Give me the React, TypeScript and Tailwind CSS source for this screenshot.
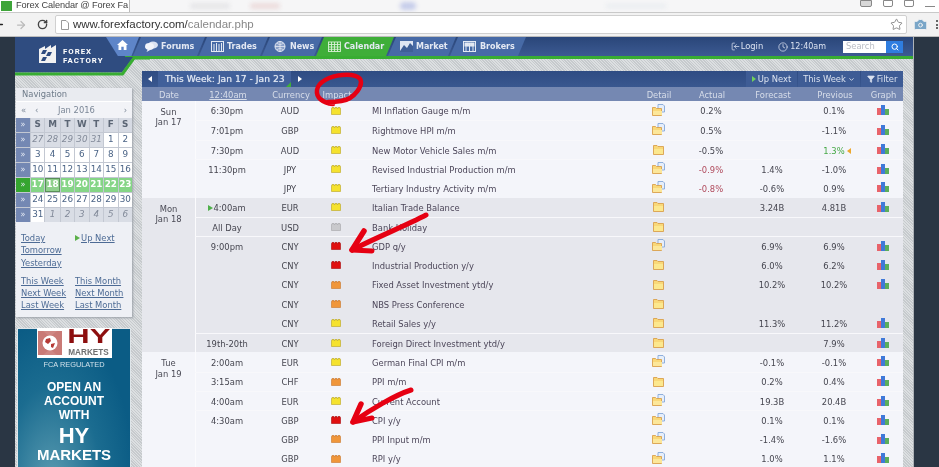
import React from "react";
import { Clock, LogIn, Search, Star, Camera, RotateCw, ArrowRight, ChevronDown, Filter } from "lucide-react";

type Imp = "y" | "o" | "r" | "g";
type Row = { t?: string; up?: boolean; c: string; i: Imp; e: string; d: "o" | "c"; a?: string; ar?: boolean; f?: string; p?: string; pg?: boolean; g?: boolean };

const days: { d: string; dt: string; bg: string; rows: Row[] }[] = [
  { d: "Sun", dt: "Jan 17", bg: "bg-[#f4f5fa]", rows: [
    { t: "6:30pm", c: "AUD", i: "y", e: "MI Inflation Gauge m/m", d: "o", a: "0.2%", p: "0.1%", g: true },
    { t: "7:01pm", c: "GBP", i: "y", e: "Rightmove HPI m/m", d: "o", a: "0.5%", p: "-1.1%", g: true },
    { t: "7:30pm", c: "AUD", i: "y", e: "New Motor Vehicle Sales m/m", d: "c", a: "-0.5%", p: "1.3%", pg: true, g: true },
    { t: "11:30pm", c: "JPY", i: "y", e: "Revised Industrial Production m/m", d: "o", a: "-0.9%", ar: true, f: "1.4%", p: "-1.0%", g: true },
    { c: "JPY", i: "y", e: "Tertiary Industry Activity m/m", d: "o", a: "-0.8%", ar: true, f: "-0.6%", p: "0.9%", g: true },
  ] },
  { d: "Mon", dt: "Jan 18", bg: "bg-[#e6e7ed]", rows: [
    { t: "4:00am", up: true, c: "EUR", i: "y", e: "Italian Trade Balance", d: "c", f: "3.24B", p: "4.81B", g: true },
    { t: "All Day", c: "USD", i: "g", e: "Bank Holiday", d: "c" },
    { t: "9:00pm", c: "CNY", i: "r", e: "GDP q/y", d: "o", f: "6.9%", p: "6.9%", g: true },
    { c: "CNY", i: "r", e: "Industrial Production y/y", d: "c", f: "6.0%", p: "6.2%", g: true },
    { c: "CNY", i: "o", e: "Fixed Asset Investment ytd/y", d: "c", f: "10.2%", p: "10.2%", g: true },
    { c: "CNY", i: "o", e: "NBS Press Conference", d: "c" },
    { c: "CNY", i: "y", e: "Retail Sales y/y", d: "c", f: "11.3%", p: "11.2%", g: true },
    { t: "19th-20th", c: "CNY", i: "y", e: "Foreign Direct Investment ytd/y", d: "c", p: "7.9%", g: true },
  ] },
  { d: "Tue", dt: "Jan 19", bg: "bg-[#f4f5fa]", rows: [
    { t: "2:00am", c: "EUR", i: "y", e: "German Final CPI m/m", d: "o", f: "-0.1%", p: "-0.1%", g: true },
    { t: "3:15am", c: "CHF", i: "o", e: "PPI m/m", d: "c", f: "0.2%", p: "0.4%", g: true },
    { t: "4:00am", c: "EUR", i: "y", e: "Current Account", d: "o", f: "19.3B", p: "20.4B", g: true },
    { t: "4:30am", c: "GBP", i: "r", e: "CPI y/y", d: "o", f: "0.1%", p: "0.1%", g: true },
    { c: "GBP", i: "o", e: "PPI Input m/m", d: "o", f: "-1.4%", p: "-1.6%", g: true },
    { c: "GBP", i: "o", e: "RPI y/y", d: "o", f: "1.0%", p: "1.1%", g: true },
  ] },
];

const impColors: Record<Imp, [string, string]> = {
  y: ["#f5e22e", "#b9a520"],
  o: ["#f0963a", "#c8762a"],
  r: ["#e01010", "#a80808"],
  g: ["#c9c9cc", "#a5a5a8"],
};

function Brick({ i }: { i: Imp }) {
  const [f, s] = impColors[i];
  return (
    <svg width="10" height="8" viewBox="0 0 10 8">
      <path d="M0.5 7.5V1.5H1V0.5H3V1.5H4V0.5H6V1.5H7V0.5H9V1.5H9.5V7.5Z" fill={f} stroke={s} strokeWidth="0.6" />
    </svg>
  );
}

function Folder({ open }: { open: boolean }) {
  if (!open) {
    return (
      <svg width="13" height="11" viewBox="0 0 13 11" className="-mt-px">
        <path d="M1.5 1.5H5L6 2.5H11.5V10.5H1.5Z" fill="#f9d878" stroke="#d9a04e" strokeWidth="0.9" />
        <path d="M2 5H11V10H2Z" fill="#fce88e" />
      </svg>
    );
  }
  return (
    <svg width="13" height="12" viewBox="0 0 13 12" className="-mt-[2px]">
      <path d="M6 0.5H11L12.5 2V8H6Z" fill="#e6eefa" stroke="#86a8d8" strokeWidth="0.9" />
      <path d="M0.5 3.5H3.5L4.5 4.5H9.5V11.5H0.5Z" fill="#f9d878" stroke="#d9a04e" strokeWidth="0.9" />
      <path d="M1 7H10V11H1Z" fill="#fce79a" />
    </svg>
  );
}

function Graph() {
  return (
    <svg width="12" height="10" viewBox="0 0 12 10" className="ml-px -mt-px">
      <rect x="0" y="3" width="4" height="7" fill="#e8636a" />
      <rect x="4" y="0" width="4" height="10" fill="#4079d8" />
      <rect x="8" y="4" width="4" height="6" fill="#5bae5b" />
    </svg>
  );
}

function Tab({ w, green, children, first }: { w: number; green?: boolean; first?: boolean; children: React.ReactNode }) {
  return (
    <div
      style={{ width: w }}
      className={`h-[19px] pl-[12px] flex items-center gap-[3px] [clip-path:polygon(8px_0,100%_0,calc(100%-8px)_100%,0_100%)] font-bold text-[8px] text-[#e4e9f3] ${first ? "" : "-ml-[6px]"} ${green ? "bg-[#3fae39]" : "bg-[#476aa6]"}`}
    >
      {children}
    </div>
  );
}

const I = "w-[13px] h-[11px] shrink-0";

function CalCell({ v, kind }: { v: string | number; kind: "in" | "out" | "head" | "green" | "sel" }) {
  const cls = {
    in: "bg-white text-[#4b6486]",
    out: "bg-[#d9dde5] text-[#828a99] italic",
    head: "bg-[#d6dae3] text-[#5c6675] font-bold",
    green: "bg-[#85d586] text-white font-bold",
    sel: "bg-[#8fd08c] text-white font-bold border border-[#5a8f58]",
  }[kind];
  return <div className={`flex items-center justify-center ${cls}`}>{v}</div>;
}

function Week({ cells, green }: { cells: React.ReactNode; green?: boolean }) {
  return (
    <>
      <div className={`flex items-center justify-center text-[#e6ebf5] text-[8px] ${green ? "bg-[#35a52f]" : "bg-[#7488b3]"}`}>»</div>
      {cells}
    </>
  );
}

const Link = ({ children }: { children: React.ReactNode }) => <span className="text-[#4d6b95] underline">{children}</span>;

export default function App() {
  const gridCols = "grid grid-cols-[64px_62px_30px_282px_50px_56px_66px_58px_39px]";
  const w1 = [27, 28, 29, 30, 31];
  return (
    <div className="relative w-[939px] h-[467px] overflow-hidden bg-[#2a3644] font-['DejaVu_Sans',sans-serif] text-[8.4px] blur-[0.3px]">
      {/* browser chrome */}
      <div className="h-[13px] bg-white border-b border-[#c9c9c9] flex items-start font-['Liberation_Sans',sans-serif] overflow-hidden">
        <div className="w-[130px] h-[12px] flex items-center pl-[1px] bg-white border-r border-[#bbb]">
          <span className="w-[11px] h-[10px] bg-[#3fa53a] mr-[4px] shrink-0" />
          <span className="text-[9.2px] tracking-[-0.1px] text-[#444] whitespace-nowrap">Forex Calendar @ Forex Fa</span>
          <span className="text-[7px] font-bold text-[#555] ml-[6px]">✕</span>
        </div>
        <div className="flex-1 h-[12px] bg-[#f6f6f7] flex items-center">
          <span className="ml-[60px] w-[40px] h-[6px] bg-[#e6e6e8] rounded blur-[2px]" />
          <span className="ml-[20px] w-[30px] h-[6px] bg-[#ecdcdc] rounded blur-[2px]" />
          <span className="ml-[120px] w-[16px] h-[8px] bg-[#c6cdea] rounded blur-[2px]" />
          <span className="ml-[190px] w-[60px] h-[4px] bg-[#e8ecf0] rounded blur-[2px]" />
        </div>
        <div className="flex items-start gap-[11px] pr-[4px] bg-white h-[12px]">
          <span className="w-[12px] h-[7px] border border-[#888] bg-[#d8d8d8] rounded-b-[2px]" />
          <span className="w-[10px] h-[7px] border border-[#888] rounded-b-[2px]" />
          <span className="w-[10px] h-[7px] border border-[#888] rounded-b-[2px]" />
          <span className="w-[10px] h-[7px] border-b border-[#888]" />
        </div>
      </div>
      <div className="h-[24px] bg-[#f2f2f2] border-b border-[#bdbdbd] flex items-center font-['Liberation_Sans',sans-serif]">
        <ArrowRight className="w-[13px] h-[13px] rotate-180 text-[#222] -ml-[8px] shrink-0" strokeWidth={3} />
        <ArrowRight className="w-[12px] h-[12px] text-[#bbb] ml-[10px] shrink-0" strokeWidth={2.5} />
        <RotateCw className="w-[11px] h-[11px] text-[#444] ml-[10px] shrink-0" strokeWidth={3} />
        <div className="ml-[7px] w-[852px] h-[19px] bg-white border border-[#d0d0d0] rounded-[2px] flex items-center pl-[5px] pr-[3px] shrink-0">
          <svg width="8" height="10" viewBox="0 0 8 10" className="shrink-0"><path d="M0.5 0.5H5L7.5 3V9.5H0.5Z" fill="#fff" stroke="#999" /></svg>
          <span className="ml-[4px] text-[11.5px] text-[#333] whitespace-nowrap">www.forexfactory.com/<span className="text-[#888]">calendar.php</span></span>
          <Star className="ml-auto w-[13px] h-[13px] text-[#777]" strokeWidth={1.5} />
        </div>
        <Camera className="ml-[6px] w-[15px] h-[15px] text-[#7aa6c8] shrink-0" fill="#7aa6c8" stroke="#f2f2f2" strokeWidth={1.5} />
        <span className="ml-[8px] flex flex-col gap-[1.5px] shrink-0">
          <span className="w-[2px] h-[2px] bg-[#666]" />
          <span className="w-[2px] h-[2px] bg-[#666]" />
          <span className="w-[2px] h-[2px] bg-[#666]" />
        </span>
      </div>

      {/* page */}
      <div className="flex h-[430px]">
        <div className="w-[15px] shrink-0" />
        <div className="relative w-[898px] h-[430px] overflow-hidden bg-[repeating-linear-gradient(45deg,#c6cacd_0_1px,#dcdfe1_1px_2px)]">
          {/* header */}
          <div className="relative h-[22px] bg-gradient-to-b from-[#2a4679] to-[#3c5a92] border-b-[3px] border-[#38ad32]">
            <div className="relative z-10 flex items-start ml-[91px]">
              <div className="w-[33px] h-[19px] bg-[#5e85c8] flex items-center justify-center [clip-path:polygon(0_0,100%_0,77%_100%,36%_100%)]">
                <svg width="11" height="10" viewBox="0 0 11 10" className="-mt-[4px]"><path d="M5.5 0L0 5H1.5V10H4.3V6.8H6.7V10H9.5V5H11Z" fill="#fff" /></svg>
              </div>
              <div className="-ml-[6px]" />
              <div className="flex">
                <Tab w={72} first>
                  <svg className={I} viewBox="0 0 13 11"><ellipse cx="8" cy="4" rx="5" ry="3.5" fill="#dbe3f2" /><ellipse cx="4.5" cy="5.5" rx="4.5" ry="3.4" fill="#f1f4fa" /><path d="M3 8L1.5 11L6 8.5Z" fill="#f1f4fa" /></svg>
                  <span>Forums</span>
                </Tab>
                <Tab w={69}>
                  <svg className={I} viewBox="0 0 13 11" fill="none" stroke="#e4e9f3"><rect x="0.5" y="0.5" width="12" height="10" /><path d="M3 3V11M5.5 2V11M8 3V11M10.5 2V11" /></svg>
                  <span>Trades</span>
                </Tab>
                <Tab w={60}>
                  <svg className={I} viewBox="0 0 13 11" fill="none" stroke="#e4e9f3"><circle cx="6" cy="5.5" r="5" fill="#8aa0c8" /><path d="M1 5.5H11M6 0.5V10.5M3 2C5 4 7 4 9.5 2M3 9C5 7 7 7 9.5 9" strokeWidth="0.8" /></svg>
                  <span>News</span>
                </Tab>
                <Tab w={78} green>
                  <svg className={I} viewBox="0 0 13 11" fill="none" stroke="#d9f0d5" strokeWidth="0.9"><rect x="0.5" y="1" width="12" height="9.5" /><path d="M0.5 3.5H12.5M0.5 6H12.5M0.5 8.3H12.5M3.5 1V10.5M6.5 1V10.5M9.5 1V10.5" /></svg>
                  <span>Calendar</span>
                </Tab>
                <Tab w={68}>
                  <svg className={I} viewBox="0 0 13 11"><rect width="13" height="11" fill="#dfe6f3" /><path d="M0 10L4 4L7 7L10 2L13 5V11H0Z" fill="#3f5f97" /></svg>
                  <span>Market</span>
                </Tab>
                <Tab w={76}>
                  <svg className={`${I} ml-[1px]`} viewBox="0 0 13 11" fill="none" stroke="#e4e9f3"><rect x="0.5" y="0.5" width="12" height="10" /><rect x="2" y="2" width="2.5" height="3" fill="#e4e9f3" /><rect x="5.2" y="2" width="2.5" height="3" fill="#e4e9f3" /><rect x="8.5" y="2" width="2.5" height="3" fill="#e4e9f3" /><path d="M3 5V10M6.5 5V10M10 5V10" /></svg>
                  <span className="ml-[1px]">Brokers</span>
                </Tab>
              </div>
            </div>
            <div className="absolute z-10 top-0 right-[10px] h-[19px] flex items-center text-[#dbe2f0]">
              <LogIn className="w-[9px] h-[9px] mr-[1px] rotate-180" strokeWidth={2} />
              <span>Login</span>
              <Clock className="w-[10px] h-[10px] ml-[15px] mr-[2px]" strokeWidth={1.8} />
              <span className="text-[8px]">12:40am</span>
              <div className="ml-[17px] w-[43px] h-[12px] bg-white flex items-center pl-[3px] text-[#b8bcc4]">Search</div>
              <div className="w-[17px] h-[12px] bg-[#2f7de0] flex items-center justify-center"><Search className="w-[8px] h-[8px] text-white" strokeWidth={3} /></div>
            </div>
            {/* logo wedge */}
            <svg className="absolute left-0 top-0" width="135" height="39" viewBox="0 0 135 39">
              <path d="M0 0H110V20H118.5L107 35.5H0Z" fill="#2f4c80" />
              <path d="M0 37H107.5L119 21H135" fill="none" stroke="#38ad32" strokeWidth="3" />
              <path d="M24 12L30 9V12L36 8V11L41 8V26H24Z" fill="#f2f2f2" />
              <path d="M28 13H32L30 17H26ZM33 15H37L35 19H31ZM28 20H32L30 24H26Z" fill="#2f4c80" />
            </svg>
            <div className="absolute z-10 left-[48px] top-[10px] text-white font-bold text-[7.8px] leading-[9px] font-['Roboto',sans-serif] tracking-[1px]">
              <div>FOREX</div>
              <div>FACTORY</div>
            </div>
          </div>

          {/* body */}
          <div className="flex">
            <div className="w-[116px] ml-[1px] pt-[29px] shrink-0">
              <div className="bg-[#eef0f5] shadow-[1px_1px_2px_#9aa0a8] h-[229px] text-[#5b6a80]">
                <div className="h-[13px] pl-[6px] flex items-center bg-[#e9ebf0] text-[#6d7a88]">Navigation</div>
                <div className="h-[17px] flex items-center bg-[#f2f3f7] text-[#7b8797] pl-[5px] pr-[5px] border-t border-white">
                  <span className="w-[12px]">«</span>
                  <span className="w-[25px] pl-[2px]">‹</span>
                  <span>Jan 2016</span>
                  <span className="ml-auto">›</span>
                </div>
                <div className="grid grid-cols-[14px_repeat(7,1fr)] grid-rows-[14px_repeat(6,14px)] gap-px bg-[#c3c8d2] text-[8.8px] w-full">
                  <Week cells={["S", "M", "T", "W", "T", "F", "S"].map((s, i) => <CalCell key={i} v={s} kind="head" />)} />
                  <Week cells={<>{w1.map(n => <CalCell key={n} v={n} kind="out" />)}<CalCell v={1} kind="in" /><CalCell v={2} kind="in" /></>} />
                  <Week cells={[3, 4, 5, 6, 7, 8, 9].map(n => <CalCell key={n} v={n} kind="in" />)} />
                  <Week cells={[10, 11, 12, 13, 14, 15, 16].map(n => <CalCell key={n} v={n} kind="in" />)} />
                  <Week green cells={[17, 18, 19, 20, 21, 22, 23].map(n => <CalCell key={n} v={n} kind={n === 18 ? "sel" : "green"} />)} />
                  <Week cells={[24, 25, 26, 27, 28, 29, 30].map(n => <CalCell key={n} v={n} kind="in" />)} />
                  <Week cells={<><CalCell v={31} kind="in" />{[1, 2, 3, 4, 5, 6].map(n => <CalCell key={n} v={n} kind="out" />)}</>} />
                </div>
                <div className="flex pl-[5px] pt-[10px] leading-[12.3px]">
                  <div className="w-[54px]">
                    <div><Link>Today</Link></div>
                    <div><Link>Tomorrow</Link></div>
                    <div><Link>Yesterday</Link></div>
                    <div className="h-[6px]" />
                    <div><Link>This Week</Link></div>
                    <div><Link>Next Week</Link></div>
                    <div><Link>Last Week</Link></div>
                  </div>
                  <div>
                    <div className="flex items-center h-[12.3px]"><span className="w-0 h-0 mr-[1px] border-y-[3.5px] border-y-transparent border-l-[5px] border-l-[#5bb04a]" /><Link>Up Next</Link></div>
                    <div className="h-[30.6px]" />
                    <div><Link>This Month</Link></div>
                    <div><Link>Next Month</Link></div>
                    <div><Link>Last Month</Link></div>
                  </div>
                </div>
              </div>

              {/* ad */}
              <div className="ml-[1px] mt-[11px] w-[114px] h-[160px] border border-[#dfe6ea] bg-[radial-gradient(ellipse_at_30%_100%,#5c9db2_0%,#1b6c90_45%,#0b5c85_75%)] flex flex-col items-center text-white font-['Liberation_Sans',sans-serif] font-bold">
                <div className="w-[75px] h-[30px] -mt-px bg-white flex items-center pl-[1px] shrink-0">
                  <svg width="24" height="24" viewBox="0 0 24 24" className="shrink-0">
                    <rect width="24" height="24" fill="#cf8783" />
                    <path d="M0 0H5L12 6L19 0H24V24H19L12 18L5 24H0Z" fill="#c97a76" />
                    <circle cx="12" cy="12" r="7.5" fill="#fff" />
                    <path d="M8 8L12 7L13 10L10 13L7 11ZM13 13L17 12L15 17L13 16Z" fill="#b53a36" />
                  </svg>
                  <div className="ml-[5px] w-[44px] flex flex-col items-center leading-none">
                    <span className="text-[20px] leading-[23px] -mt-[3px] text-[#8d0f0f] scale-x-[1.55]">HY</span>
                    <span className="text-[8.2px] leading-[10px] text-[#6f6f6f]">MARKETS</span>
                  </div>
                </div>
                <div className="mt-[2px] text-[7.4px] font-normal text-[#cfe0ea] leading-[9px]">FCA REGULATED</div>
                <div className="mt-[11px] text-[12px] leading-[14px] text-center">OPEN AN<br />ACCOUNT<br />WITH</div>
                <div className="mt-[3px] text-[22px] leading-[21px]">HY</div>
                <div className="text-[15px] leading-[17px]">MARKETS</div>
              </div>
            </div>

            {/* table */}
            <div className="ml-[10px] mt-[12px] w-[761px] shrink-0">
              <div className="h-[16px] flex bg-gradient-to-b from-[#2f4c83] to-[#39578f] text-[#dce3f0]">
                <div className="w-[16px] flex items-center justify-center"><span className="w-0 h-0 border-y-[3px] border-y-transparent border-r-[4px] border-r-white" /></div>
                <div className="relative w-[133px] pl-[7px] flex items-center whitespace-nowrap text-[9.2px] [text-shadow:0_0_0.7px_#dce3f0] bg-[#41609a]">
                  This Week: Jan 17 - Jan 23
                  <span className="absolute right-0 bottom-0 w-0 h-0 border-b-[5px] border-b-[#3fae39] border-l-[5px] border-l-transparent" />
                </div>
                <div className="w-[17px] flex items-center justify-center"><span className="w-0 h-0 border-y-[3px] border-y-transparent border-l-[4px] border-l-white" /></div>
                <div className="flex-1" />
                <div className="w-[51px] flex items-center justify-center gap-[2px] bg-[#3e5c95]"><span className="w-0 h-0 border-y-[3px] border-y-transparent border-l-[4px] border-l-[#6fd05c]" />Up Next</div>
                <div className="ml-px w-[62px] flex items-center justify-center gap-[2px] bg-[#3e5c95]">This Week<ChevronDown className="w-[7px] h-[7px]" strokeWidth={3} /></div>
                <div className="ml-px w-[42px] flex items-center justify-center gap-[2px] bg-[#3e5c95]"><Filter className="w-[8px] h-[8px]" fill="#dce3f0" />Filter</div>
              </div>
              <div className="h-[14px] pt-[2px] box-border grid grid-cols-[54px_64px_62px_30px_282px_50px_56px_66px_58px_39px] items-center text-center bg-[#7588b2] text-[#d8deea]">
                <div>Date</div>
                <div className="underline">12:40am</div>
                <div>Currency</div>
                <div>Impact</div>
                <div />
                <div>Detail</div>
                <div>Actual</div>
                <div>Forecast</div>
                <div>Previous</div>
                <div>Graph</div>
              </div>
              {days.map(day => (
                <div key={day.d} className={`flex ${day.bg}`}>
                  <div className="w-[54px] shrink-0 pt-[6px] text-center leading-[10.3px] text-[#4a4a55] border-r border-[#fbfbfd]">
                    <div>{day.d}</div>
                    <div>{day.dt}</div>
                  </div>
                  <div className="-ml-px flex-1">
                    {day.rows.map((r, i) => (
                      <div key={i} className={`${gridCols} h-[19.33px] items-center text-center text-[#45454f] box-border ${r.t && i > 0 ? "border-t border-[#f8f8fb]" : ""}`}>
                        <div className="pt-[2px] flex items-center justify-center whitespace-nowrap">
                          {r.up && <span className="w-0 h-0 border-y-[3.5px] border-y-transparent border-l-[5px] border-l-[#4fb04a]" />}
                          {r.t}
                        </div>
                        <div className="pt-[2px]">{r.c}</div>
                        <div className="flex justify-center"><Brick i={r.i} /></div>
                        <div className="pt-[2px] text-left pl-[21px] text-[#4c4659] whitespace-nowrap">{r.e}</div>
                        <div className="flex justify-center"><Folder open={r.d === "o"} /></div>
                        <div className={`pt-[2px] ${r.ar ? "text-[#b04a5c]" : ""}`}>{r.a}</div>
                        <div className="pt-[2px]">{r.f}</div>
                        <div className={`pt-[2px] flex items-center justify-center gap-[2px] ${r.pg ? "text-[#45a845]" : ""}`}>
                          {r.p}
                          {r.pg && <span className="w-0 h-0 border-y-[3px] border-y-transparent border-r-[4px] border-r-[#eda82e] -mr-[6px]" />}
                        </div>
                        <div className="flex justify-center">{r.g && <Graph />}</div>
                      </div>
                    ))}
                  </div>
                </div>
              ))}
            </div>
          </div>
        </div>
        <div className="flex-1 border-l border-[#aeb3b8]" />
      </div>

      {/* hand-drawn annotations */}
      <svg className="absolute left-0 top-0 pointer-events-none z-20" width="939" height="467" viewBox="0 0 939 467" fill="none" stroke="#e60012" strokeLinecap="round" strokeLinejoin="round">
        <path d="M333 104C322 103 316 97 317 90C318 82 330 76 342 75C352 74 361 76 361 82C361 88 355 95 350 98C345 101 338 102 328 102" strokeWidth="4.5" />
        <path d="M426 215C405 226 375 238 352 250L372 251" strokeWidth="5" />
        <path d="M364 231L352 250" strokeWidth="5.5" />
        <path d="M411 390C395 395 370 410 353 422L372 418" strokeWidth="5" />
        <path d="M361 404L353 422" strokeWidth="5.5" />
      </svg>
    </div>
  );
}
